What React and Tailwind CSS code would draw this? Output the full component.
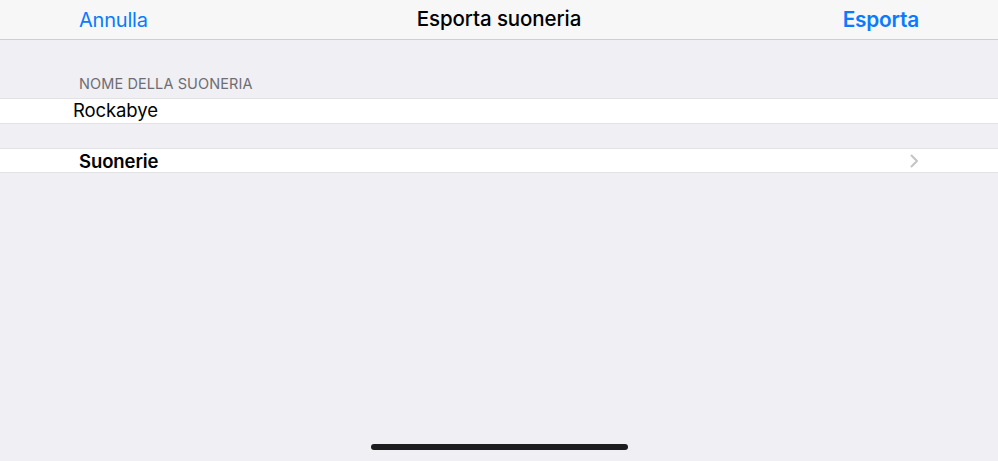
export default function App() {
  return (
    <div
      className="w-[998px] h-[461px] bg-[#efeff4] flex flex-col relative overflow-hidden"
      style={{ fontFamily: '"Inter", "Liberation Sans", sans-serif' }}
    >
      {/* Barra di navigazione */}
      <div className="h-[40px] bg-[#f7f7f8] border-b border-[#cfcfd3] flex items-center px-[79px] relative">
        <button className="text-[20px] text-[#0a7aff] tracking-[-0.2px]">Annulla</button>
        <div className="absolute left-0 right-0 top-0 h-[39px] flex items-center justify-center pointer-events-none">
          <span className="text-[20.5px] font-medium text-black tracking-[-0.1px]">Esporta suoneria</span>
        </div>
        <button className="ml-auto text-[20.8px] font-semibold text-[#0a7aff] tracking-[-0.2px]">Esporta</button>
      </div>

      {/* Nome della suoneria */}
      <div className="pt-[34px] pb-[4px] px-[79px] text-[14.5px] leading-[20px] text-[#6d6d72] tracking-[0.1px]">
        NOME DELLA SUONERIA
      </div>
      <div className="h-[26px] bg-white border-y border-[#e2e2e6] flex items-center pl-[73px]">
        <span className="text-[18.5px] text-black tracking-[-0.1px]">Rockabye</span>
      </div>

      {/* Suonerie */}
      <div className="mt-[24px] h-[25px] bg-white border-y border-[#e2e2e6] flex items-center pl-[79px] pr-[79px]">
        <span className="text-[18.5px] font-semibold text-black tracking-[-0.1px] translate-y-[1px]">Suonerie</span>
        <svg className="ml-auto" width="9" height="14" viewBox="0 0 9 14" fill="none">
          <path d="M1.5 1.5 L7 7 L1.5 12.5" stroke="#c4c4c7" strokeWidth="2" strokeLinecap="round" strokeLinejoin="round" />
        </svg>
      </div>

      {/* Indicatore home */}
      <div className="absolute left-[371px] top-[444px] w-[257px] h-[6px] rounded-full bg-[#1c1c1e]" />
    </div>
  )
}
